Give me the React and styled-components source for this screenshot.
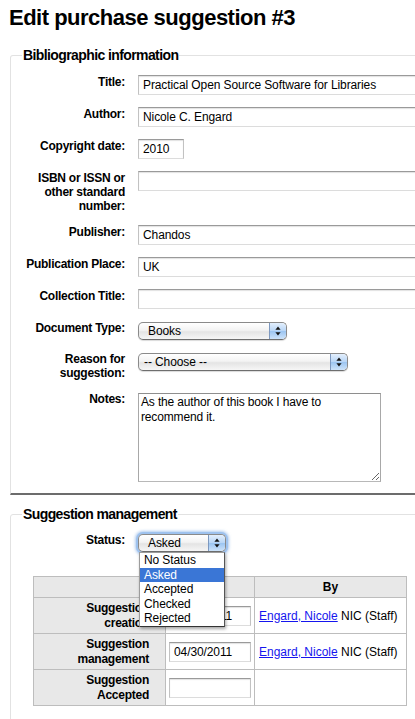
import React from 'react';
import styled, { createGlobalStyle } from 'styled-components';

const GlobalStyle = createGlobalStyle`
  html, body {
    margin: 0;
    padding: 0;
    background: #fff;
    overflow: hidden;
  }
  body {
    font-family: "Liberation Sans", Arial, Helvetica, sans-serif;
    color: #000;
  }
`;

const Page = styled.div`
  width: 415px;
  box-sizing: border-box;
  padding: 0 0 0 9px;
  overflow: hidden;
`;

const Heading = styled.h1`
  margin: 5px 0 0;
  font-size: 22px;
  line-height: 25px;
  font-weight: bold;
  letter-spacing: -0.5px;
`;

const Fieldset = styled.fieldset`
  margin: ${p => (p.$first ? '17px' : '11px')} -40px 0 1px;
  padding: ${p => (p.$first ? '12px 0 11px 11px' : '11px 0 40px 11px')};
  border: 1px solid #e2e2e2;
  border-bottom: ${p => (p.$first ? '2px solid #6c6c6c' : '1px solid #e2e2e2')};
  border-top-left-radius: 3px;
  min-width: 0;
`;

const Legend = styled.legend`
  padding: 0 1px;
  font-size: 14px;
  line-height: 16px;
  font-weight: bold;
  letter-spacing: -0.6px;
`;

const Rows = styled.ol`
  list-style: none;
  margin: 0;
  padding: 0;
  display: flex;
  flex-direction: column;
  gap: 12px;
`;

const Row = styled.li`
  display: flex;
  align-items: flex-start;
  gap: 13px;
`;

const Label = styled.label`
  flex: 0 0 103px;
  text-align: right;
  font-size: 12px;
  line-height: 14px;
  font-weight: bold;
  letter-spacing: -0.25px;
`;

const TextInput = styled.input`
  width: ${p => p.$w}px;
  height: 20px;
  box-sizing: border-box;
  margin: 0;
  padding: 0 3px 0 4px;
  border: 1px solid;
  border-color: #9a9a9a #c2c2c2 #dcdcdc #c2c2c2;
  box-shadow: inset 0 1px 1px rgba(0, 0, 0, 0.12);
  background: #fff;
  font-family: "Liberation Sans", Arial, sans-serif;
  font-size: 12px;
  letter-spacing: -0.1px;
  color: #000;
  outline: none;
`;

const TextArea = styled.textarea`
  width: 243px;
  height: 89px;
  box-sizing: border-box;
  margin: 1px 0 0;
  padding: 1px 2px;
  border: 1px solid;
  border-color: #8e8e8e #a8a8a8 #b8b8b8 #a8a8a8;
  font-family: "Liberation Sans", Arial, sans-serif;
  font-size: 12px;
  line-height: 15px;
  letter-spacing: -0.15px;
  color: #000;
  outline: none;
`;

const SelectWrap = styled.div`
  position: relative;
  margin-top: 1px;
`;

const Select = styled.div`
  position: relative;
  display: flex;
  align-items: center;
  width: ${p => p.$w}px;
  height: 18px;
  box-sizing: border-box;
  padding-left: ${p => p.$pad}px;
  border: 1px solid #8a8a8a;
  border-bottom-color: #6e6e6e;
  border-radius: 5px;
  background: linear-gradient(#ffffff, #f3f3f3 45%, #e4e4e4 55%, #f6f6f6);
  box-shadow: ${p =>
    p.$focused
      ? '0 0 0 2px #9ec2ee, 0 0 3px 3px rgba(110, 160, 225, 0.55)'
      : '0 1px 1px rgba(0, 0, 0, 0.15)'};
  font-size: 12px;
  letter-spacing: -0.1px;
  color: #000;
  overflow: hidden;
`;

const ArrowButton = styled.span`
  position: absolute;
  top: 0;
  right: 0;
  bottom: 0;
  width: 16px;
  display: flex;
  align-items: center;
  justify-content: center;
  border-left: 1px solid #7d98bf;
  border-radius: 0 4px 4px 0;
  background: linear-gradient(#e3effd, #b9d6f6 48%, #9cc5f1 52%, #cde3fa);
`;

const Dropdown = styled.ul`
  position: absolute;
  top: 18px;
  left: 1px;
  z-index: 5;
  width: 86px;
  box-sizing: border-box;
  margin: 0;
  padding: 0;
  list-style: none;
  background: #fff;
  border: 1px solid #9c9c9c;
  border-right-color: #555;
  border-bottom-color: #333;
  box-shadow: 1px 2px 3px rgba(0, 0, 0, 0.35);
`;

const Option = styled.li`
  height: 14.5px;
  line-height: 14.5px;
  padding-left: 4px;
  font-size: 12px;
  letter-spacing: -0.1px;
  color: ${p => (p.$active ? '#fff' : '#000')};
  background: ${p => (p.$active ? '#3a76d6' : 'transparent')};
`;

const Table = styled.table`
  margin: 24px 0 0 11px;
  width: 373px;
  border-collapse: collapse;
  table-layout: fixed;
  font-size: 12px;
`;

const Col = styled.col`
  width: ${p => p.$w}px;
`;

const HeadCell = styled.th`
  height: 20px;
  padding: 0 4px;
  border: 1px solid #bdbdbd;
  background: #e8e8e8;
  font-weight: bold;
  text-align: center;
`;

const RowHead = styled.th`
  height: 35px;
  padding: 0 16px 0 4px;
  border: 1px solid #bdbdbd;
  background: #e8e8e8;
  font-weight: bold;
  line-height: 14.5px;
  letter-spacing: -0.25px;
  text-align: right;
`;

const Cell = styled.td`
  height: 35px;
  padding: 0 ${p => (p.$link ? 4 : 3)}px;
  border: 1px solid #bdbdbd;
  vertical-align: middle;
  white-space: nowrap;
  overflow: hidden;
`;

const CellInput = styled(TextInput)`
  display: block;
`;

const StaffLink = styled.a`
  color: #1515ee;
  text-decoration: underline;
`;

function Arrows() {
  return (
    <svg width="6" height="10" viewBox="0 0 6 10">
      <path d="M3 0.5 L5.6 3.8 L0.4 3.8 Z" fill="#111" />
      <path d="M3 9.5 L5.6 6.2 L0.4 6.2 Z" fill="#111" />
    </svg>
  );
}

function PopupSelect({ width, pad, value, focused, children }) {
  return (
    <SelectWrap>
      <Select $w={width} $pad={pad} $focused={focused}>
        {value}
        <ArrowButton>
          <Arrows />
        </ArrowButton>
      </Select>
      {children}
    </SelectWrap>
  );
}

const statuses = ['No Status', 'Asked', 'Accepted', 'Checked', 'Rejected'];

const dates = [
  { label: ['Suggestion', 'creation'], date: '04/30/2011', by: true },
  { label: ['Suggestion', 'management'], date: '04/30/2011', by: true },
  { label: ['Suggestion', 'Accepted'], date: '', by: false },
];

export default function App() {
  return (
    <Page>
      <GlobalStyle />
      <Heading>Edit purchase suggestion #3</Heading>

      <Fieldset $first>
        <Legend>Bibliographic information</Legend>
        <Rows>
          <Row>
            <Label>Title:</Label>
            <TextInput $w={300} defaultValue="Practical Open Source Software for Libraries" />
          </Row>
          <Row>
            <Label>Author:</Label>
            <TextInput $w={300} defaultValue="Nicole C. Engard" />
          </Row>
          <Row>
            <Label>Copyright date:</Label>
            <TextInput $w={46} defaultValue="2010" />
          </Row>
          <Row>
            <Label>ISBN or ISSN or other standard number:</Label>
            <TextInput $w={300} defaultValue="" />
          </Row>
          <Row>
            <Label>Publisher:</Label>
            <TextInput $w={300} defaultValue="Chandos" />
          </Row>
          <Row>
            <Label>Publication Place:</Label>
            <TextInput $w={300} defaultValue="UK" />
          </Row>
          <Row>
            <Label>Collection Title:</Label>
            <TextInput $w={300} defaultValue="" />
          </Row>
          <Row>
            <Label>Document Type:</Label>
            <PopupSelect width={149} pad={9} value="Books" />
          </Row>
          <Row>
            <Label>Reason for suggestion:</Label>
            <PopupSelect width={210} pad={5} value="-- Choose --" />
          </Row>
          <Row>
            <Label>Notes:</Label>
            <TextArea defaultValue="As the author of this book I have to recommend it." />
          </Row>
        </Rows>
      </Fieldset>

      <Fieldset>
        <Legend>Suggestion management</Legend>
        <Rows>
          <Row>
            <Label>Status:</Label>
            <PopupSelect width={88} pad={9} value="Asked" focused>
              <Dropdown>
                {statuses.map(s => (
                  <Option key={s} $active={s === 'Asked'}>{s}</Option>
                ))}
              </Dropdown>
            </PopupSelect>
          </Row>
        </Rows>
        <Table>
          <colgroup>
            <Col $w={132} />
            <Col $w={89} />
            <Col $w={152} />
          </colgroup>
          <thead>
            <tr>
              <HeadCell />
              <HeadCell />
              <HeadCell>By</HeadCell>
            </tr>
          </thead>
          <tbody>
            {dates.map(d => (
              <tr key={d.label.join(' ')}>
                <RowHead>
                  {d.label[0]}
                  <br />
                  {d.label[1]}
                </RowHead>
                <Cell>
                  <CellInput $w={82} defaultValue={d.date} />
                </Cell>
                <Cell $link>
                  {d.by && (
                    <>
                      <StaffLink href="#">Engard, Nicole</StaffLink> NIC (Staff)
                    </>
                  )}
                </Cell>
              </tr>
            ))}
          </tbody>
        </Table>
      </Fieldset>
    </Page>
  );
}
